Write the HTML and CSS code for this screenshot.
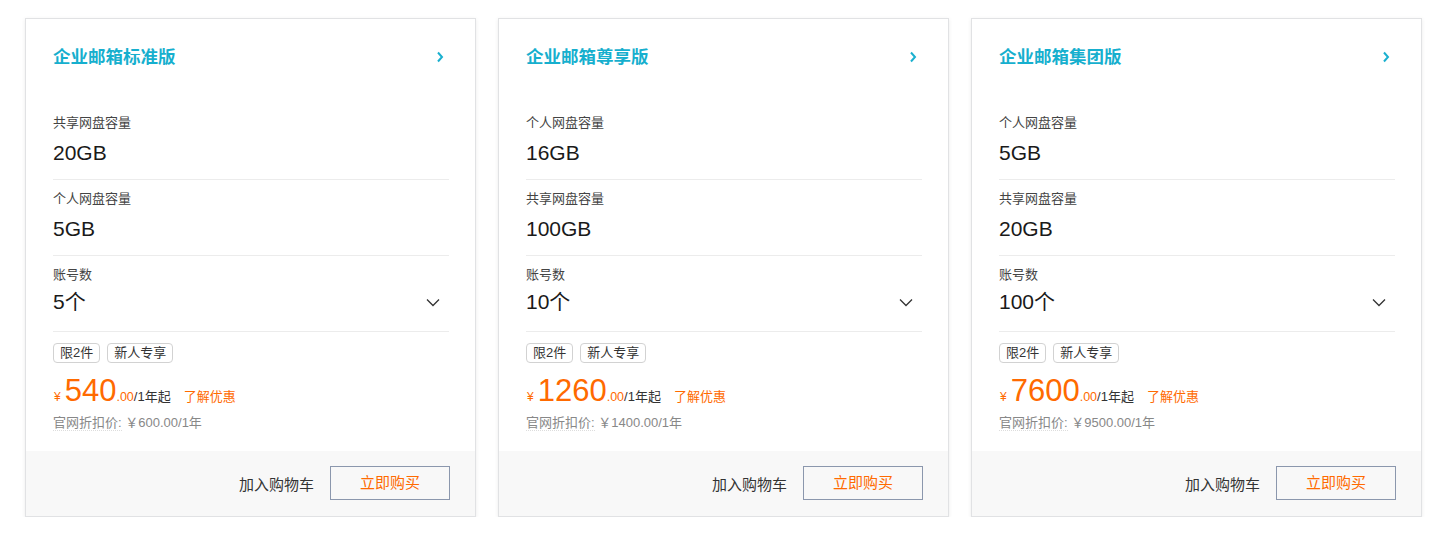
FILE: index.html
```html
<!DOCTYPE html>
<html lang="zh-CN">
<head>
<meta charset="utf-8">
<title>企业邮箱</title>
<link rel="stylesheet" href="styles.css">
</head>
<body>
<div class="cards">
  <div class="card">
    <div class="card-body">
      <div class="card-head">
        <span class="title">企业邮箱标准版</span>
        <svg class="arrow-right" width="8" height="12" viewBox="0 0 8 12"><polyline points="2,1.5 6,6 2,10.5" fill="none" stroke="#1ab0cf" stroke-width="2"/></svg>
      </div>
      <div class="spec"><div class="spec-label">共享网盘容量</div><div class="spec-value">20GB</div></div>
      <div class="spec"><div class="spec-label">个人网盘容量</div><div class="spec-value">5GB</div></div>
      <div class="spec"><div class="spec-label">账号数</div><div class="spec-value spec-select"><span>5个</span><svg class="arrow-down" width="14" height="9" viewBox="0 0 14 9"><polyline points="1,1.5 7,7.5 13,1.5" fill="none" stroke="#333" stroke-width="1.3"/></svg></div></div>
      <div class="tags"><span class="tag">限2件</span><span class="tag">新人专享</span></div>
      <div class="price-row"><span class="yen">¥</span><span class="amount">540</span><span class="cents">.00</span><span class="unit">/1年起</span><a class="promo">了解优惠</a></div>
      <div class="orig"><span class="orig-label">官网折扣价:</span> <span class="orig-yen">￥</span>600.00/1年</div>
    </div>
    <div class="card-foot"><span class="cart">加入购物车</span><span class="buy">立即购买</span></div>
  </div>
  <div class="card">
    <div class="card-body">
      <div class="card-head">
        <span class="title">企业邮箱尊享版</span>
        <svg class="arrow-right" width="8" height="12" viewBox="0 0 8 12"><polyline points="2,1.5 6,6 2,10.5" fill="none" stroke="#1ab0cf" stroke-width="2"/></svg>
      </div>
      <div class="spec"><div class="spec-label">个人网盘容量</div><div class="spec-value">16GB</div></div>
      <div class="spec"><div class="spec-label">共享网盘容量</div><div class="spec-value">100GB</div></div>
      <div class="spec"><div class="spec-label">账号数</div><div class="spec-value spec-select"><span>10个</span><svg class="arrow-down" width="14" height="9" viewBox="0 0 14 9"><polyline points="1,1.5 7,7.5 13,1.5" fill="none" stroke="#333" stroke-width="1.3"/></svg></div></div>
      <div class="tags"><span class="tag">限2件</span><span class="tag">新人专享</span></div>
      <div class="price-row"><span class="yen">¥</span><span class="amount">1260</span><span class="cents">.00</span><span class="unit">/1年起</span><a class="promo">了解优惠</a></div>
      <div class="orig"><span class="orig-label">官网折扣价:</span> <span class="orig-yen">￥</span>1400.00/1年</div>
    </div>
    <div class="card-foot"><span class="cart">加入购物车</span><span class="buy">立即购买</span></div>
  </div>
  <div class="card">
    <div class="card-body">
      <div class="card-head">
        <span class="title">企业邮箱集团版</span>
        <svg class="arrow-right" width="8" height="12" viewBox="0 0 8 12"><polyline points="2,1.5 6,6 2,10.5" fill="none" stroke="#1ab0cf" stroke-width="2"/></svg>
      </div>
      <div class="spec"><div class="spec-label">个人网盘容量</div><div class="spec-value">5GB</div></div>
      <div class="spec"><div class="spec-label">共享网盘容量</div><div class="spec-value">20GB</div></div>
      <div class="spec"><div class="spec-label">账号数</div><div class="spec-value spec-select"><span>100个</span><svg class="arrow-down" width="14" height="9" viewBox="0 0 14 9"><polyline points="1,1.5 7,7.5 13,1.5" fill="none" stroke="#333" stroke-width="1.3"/></svg></div></div>
      <div class="tags"><span class="tag">限2件</span><span class="tag">新人专享</span></div>
      <div class="price-row"><span class="yen">¥</span><span class="amount">7600</span><span class="cents">.00</span><span class="unit">/1年起</span><a class="promo">了解优惠</a></div>
      <div class="orig"><span class="orig-label">官网折扣价:</span> <span class="orig-yen">￥</span>9500.00/1年</div>
    </div>
    <div class="card-foot"><span class="cart">加入购物车</span><span class="buy">立即购买</span></div>
  </div>
</div>
</body>
</html>
```

FILE: styles.css
```css
* { box-sizing: border-box; }
body {
  margin: 0;
  background: #fff;
  font-family: "Liberation Sans", "Noto Sans CJK SC", sans-serif;
  color: #333;
}
.cards {
  display: flex;
  gap: 22px;
  padding: 18px 18px 0 25px;
}
.card {
  flex: 1;
  height: 499px;
  border: 1px solid #e1e2e4;
  box-shadow: 0 1px 4px rgba(0, 0, 0, 0.08);
  display: flex;
  flex-direction: column;
  background: #fff;
}
.card-body {
  flex: 1;
  padding: 0 26px 0 27px;
}
.card-head {
  display: flex;
  align-items: center;
  justify-content: space-between;
  padding-top: 27px;
  height: 49px;
  padding-right: 5px;
  margin-bottom: 36px;
}
.title {
  font-size: 17.5px;
  font-weight: bold;
  color: #16afce;
  line-height: 22px;
}
.spec {
  padding: 10px 0 13px;
  border-bottom: 1px solid #ececec;
}
.spec-label {
  font-size: 13px;
  line-height: 18px;
  color: #444;
}
.spec-value {
  margin-top: 8px;
  font-size: 21px;
  line-height: 26px;
  color: #1a1a1a;
}
.spec-select {
  display: flex;
  align-items: center;
  justify-content: space-between;
  margin-top: 5px;
  padding-bottom: 3px;
}
.arrow-down { margin-right: 9px; }
.tags {
  display: flex;
  gap: 7px;
  margin-top: 11px;
}
.tag {
  height: 20px;
  padding: 0 6px;
  border: 1px solid #d2d2d2;
  border-radius: 4px;
  font-size: 13px;
  line-height: 18px;
  color: #333;
}
.price-row {
  margin-top: 13px;
  line-height: 30px;
  white-space: nowrap;
}
.yen {
  font-size: 12px;
  color: #ff6a00;
  margin-right: 4px;
  margin-left: 1px;
}
.amount {
  font-size: 31px;
  color: #ff6a00;
}
.cents {
  font-size: 12.5px;
  color: #ff6a00;
}
.unit {
  font-size: 13px;
  color: #333;
}
.promo {
  font-size: 13px;
  color: #ff6a00;
  margin-left: 13px;
}
.orig {
  margin-top: 1px;
  font-size: 13px;
  line-height: 18px;
  color: #888;
  white-space: pre;
}
.orig-label {
  border-bottom: 1px dotted #ddd;
}
.orig-yen {
  font-family: "Noto Sans CJK SC", sans-serif;
}
.card-foot {
  height: 65px;
  background: #f8f8f8;
  display: flex;
  align-items: center;
  justify-content: flex-end;
  padding: 0 25px 1px 0;
  gap: 16px;
}
.cart {
  font-size: 15px;
  color: #333;
}
.buy {
  width: 120px;
  height: 34px;
  border: 1px solid #8b97ad;
  color: #ff6a00;
  font-size: 15px;
  line-height: 32px;
  text-align: center;
}
```
